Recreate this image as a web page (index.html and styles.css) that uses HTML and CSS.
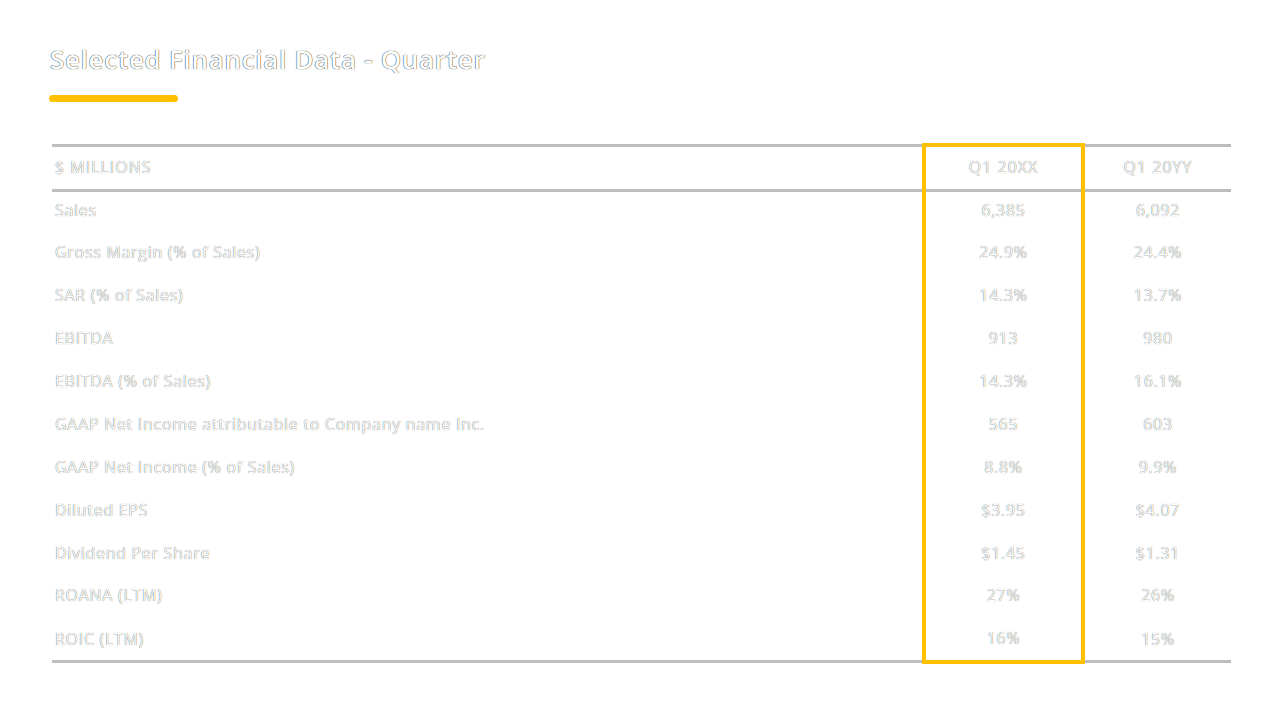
FILE: index.html
```html
<!DOCTYPE html>
<html>
<head>
<meta charset="utf-8">
<link rel="stylesheet" href="styles.css">
</head>
<body>
<div class="slide">
  <h1 class="title">Selected Financial Data - Quarter</h1>
  <div class="accent"></div>
  <table class="fin">
    <thead>
      <tr><th class="label">$ MILLIONS</th><th class="hl">Q1 20XX</th><th class="num">Q1 20YY</th></tr>
    </thead>
    <tbody>
      <tr><td class="label">Sales</td><td class="hl">6,385</td><td class="num">6,092</td></tr>
      <tr><td class="label">Gross Margin (% of Sales)</td><td class="hl">24.9%</td><td class="num">24.4%</td></tr>
      <tr><td class="label">SAR (% of Sales)</td><td class="hl">14.3%</td><td class="num">13.7%</td></tr>
      <tr><td class="label">EBITDA</td><td class="hl">913</td><td class="num">980</td></tr>
      <tr><td class="label">EBITDA (% of Sales)</td><td class="hl">14.3%</td><td class="num">16.1%</td></tr>
      <tr><td class="label">GAAP Net Income attributable to Company name Inc.</td><td class="hl">565</td><td class="num">603</td></tr>
      <tr><td class="label">GAAP Net Income (% of Sales)</td><td class="hl">8.8%</td><td class="num">9.9%</td></tr>
      <tr><td class="label">Diluted EPS</td><td class="hl">$3.95</td><td class="num">$4.07</td></tr>
      <tr><td class="label">Dividend Per Share</td><td class="hl">$1.45</td><td class="num">$1.31</td></tr>
      <tr><td class="label">ROANA (LTM)</td><td class="hl">27%</td><td class="num">26%</td></tr>
      <tr class="last"><td class="label">ROIC (LTM)</td><td class="hl">16%</td><td class="num">15%</td></tr>
    </tbody>
  </table>
</div>
</body>
</html>
```
FILE: styles.css
```css
html, body {
  margin: 0;
  padding: 0;
  background: #ffffff;
}
.slide {
  width: 1280px;
  height: 720px;
  box-sizing: border-box;
  padding: 42px 49px 0 52px;
  font-family: "Open Sans", "Liberation Sans", sans-serif;
  color: #ffffff;
}
.title {
  margin: 0 0 0 -2px;
  font-size: 26px;
  font-weight: 600;
  letter-spacing: 0.7px;
  line-height: 34px;
  color: #ffffff;
  text-shadow: 0 0 0.8px rgba(0,0,0,0.9), 0 0 0.8px rgba(0,0,0,0.6);
}
.accent {
  width: 129px;
  height: 7px;
  margin: 19px 0 0 -3px;
  background: #ffc000;
  border-radius: 4px;
}
.fin {
  margin-top: 41px;
  width: 1179px;
  border-collapse: collapse;
  font-size: 16px;
  letter-spacing: 0.7px;
  text-shadow: 0 0 0.7px rgba(0,0,0,0.8);
}
.fin th, .fin td {
  padding: 0;
  font-weight: 400;
}
.fin thead tr {
  height: 45px;
  border-top: 3px solid #bdbdbd;
  border-bottom: 3px solid #bdbdbd;
}
.fin th {
  font-size: 16px;
  letter-spacing: 1px;
  padding-bottom: 2px;
}
.fin tbody tr {
  height: 42.9px;
}
.fin tbody td {
  padding-bottom: 4px;
}
.fin tbody tr.last {
  border-bottom: 3px solid #bdbdbd;
}
.fin tbody tr.last td {
  padding-bottom: 2px;
}
.label {
  text-align: left;
  padding-left: 3px !important;
}
.hl {
  width: 155px;
  text-align: center;
  border-left: 4px solid #ffc000;
  border-right: 4px solid #ffc000;
}
.fin thead .hl {
  border-top: 4px solid #ffc000;
}
.fin tr.last .hl {
  border-bottom: 4px solid #ffc000;
}
.num {
  width: 146px;
  text-align: center;
}
```
